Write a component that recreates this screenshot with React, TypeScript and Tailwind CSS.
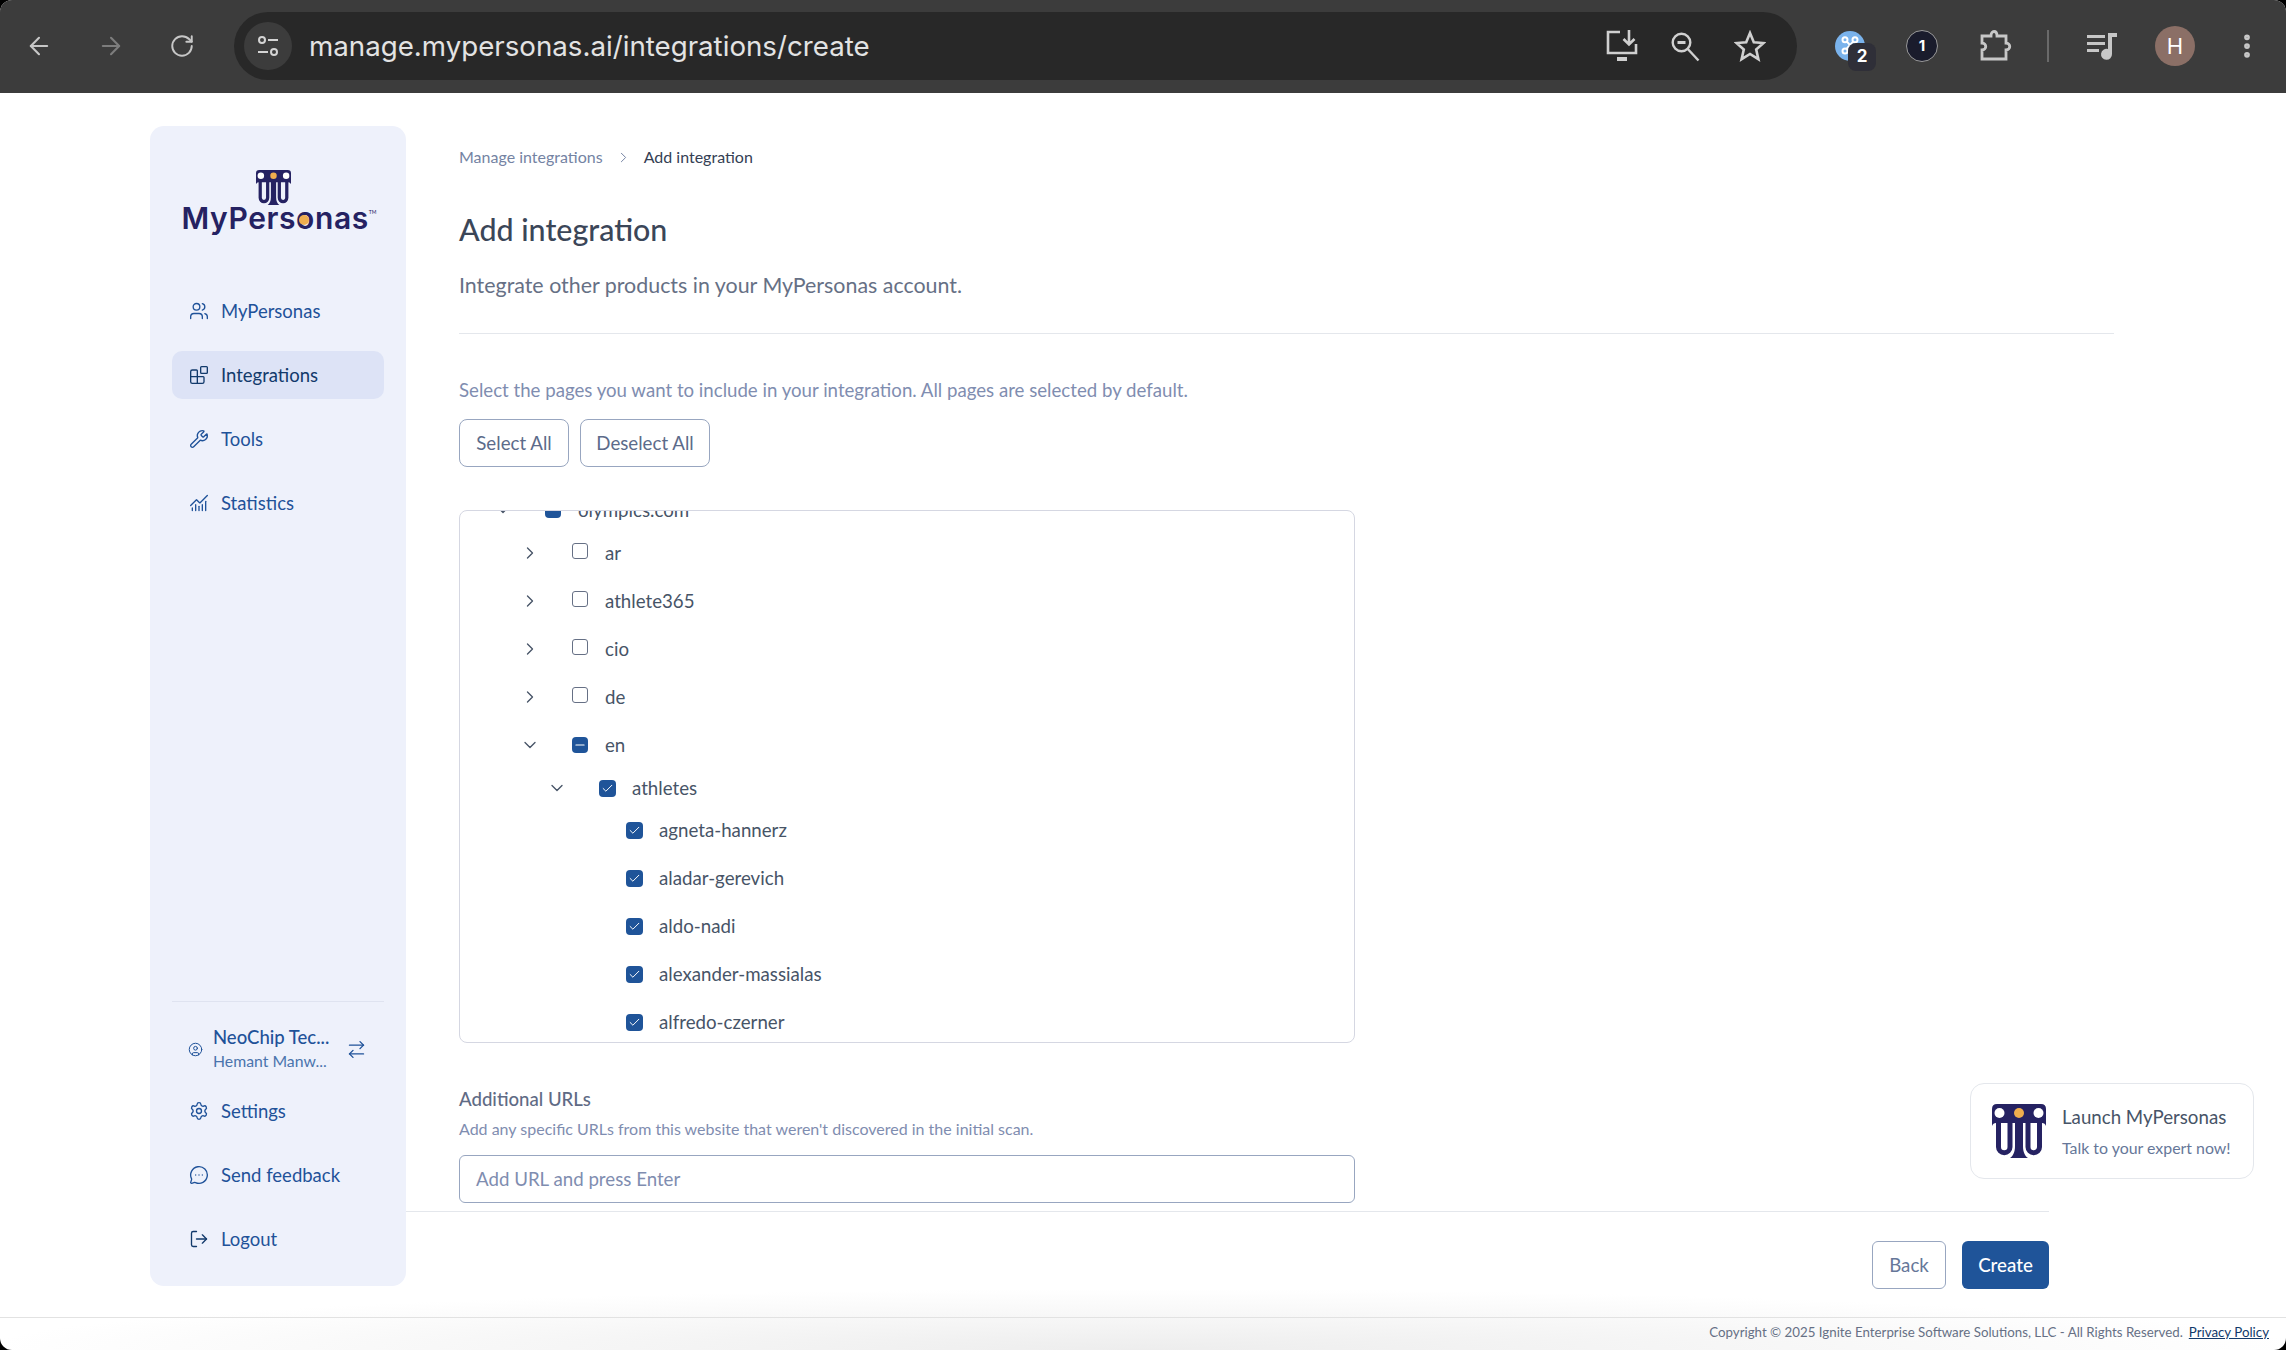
import {
  ArrowLeft,
  ArrowRight,
  ArrowRightLeft,
  Blocks,
  ChartNoAxesCombined,
  Check,
  ChevronDown,
  ChevronRight,
  CircleUser,
  EllipsisVertical,
  LogOut,
  MessageCircleMore,
  Minus,
  RotateCw,
  Settings,
  Users,
  Wrench,
} from "lucide-react";

function Emblem({ className }: { className?: string }) {
  return (
    <svg viewBox="0 0 54 54" className={className}>
      <path d="M5 0H49Q54 0 54 5V22Q53 19 50 19H4Q1 19 0 22V5Q0 0 5 0Z" fill="#252262" />
      <path d="M6.5 18V43a5.75 5.75 0 0 0 11.5 0V18" fill="none" stroke="#252262" strokeWidth="5" />
      <path d="M47.5 18V43a5.75 5.75 0 0 1 -11.5 0V18" fill="none" stroke="#252262" strokeWidth="5" />
      <path d="M23 18H31V42C31 48 33 52 36 54H18C21 52 23 48 23 42Z" fill="#252262" />
      <circle cx="7.5" cy="9" r="5" fill="#ffffff" />
      <circle cx="27" cy="9" r="5" fill="#efae4e" />
      <circle cx="46.5" cy="9" r="5" fill="#ffffff" />
    </svg>
  );
}

function Logo() {
  return (
    <div className="flex flex-col items-center">
      <Emblem className="mr-[12px] h-[35px] w-[35px]" />
      <div className="relative -mt-[4px] flex items-start">
        <span className="font-['Inter',sans-serif] text-[30px] leading-[34px] font-semibold tracking-[0.6px] text-[#252262]">
          MyPersonas
        </span>
        <span className="mt-[9px] text-[5px] leading-none text-[#252262]">TM</span>
        <span className="absolute top-[14px] left-[117px] h-[10px] w-[10px] rounded-full bg-[#efae4e]" />
      </div>
    </div>
  );
}

function NavItem({ icon: Icon, label, active, darkIcon }: { icon: typeof Users; label: string; active?: boolean; darkIcon?: boolean }) {
  return (
    <div
      className={
        active
          ? "flex h-[48px] items-center gap-[12px] rounded-[10px] bg-[#dde3f6] pl-[17px] text-[#123a6b]"
          : "flex h-[48px] items-center gap-[12px] rounded-[10px] pl-[17px] text-[#1f5299]"
      }
    >
      <Icon size={20} strokeWidth={1.6} className={darkIcon ? "text-[#123a6b]" : ""} />
      <span className="text-[18.5px] leading-none">{label}</span>
    </div>
  );
}

function Sidebar() {
  return (
    <aside className="mt-[33px] flex h-[1160px] w-[256px] shrink-0 flex-col justify-between rounded-[14px] bg-[#eef1fb] px-[22px] pt-[44px] pb-[23px]">
      <div>
        <div className="ml-[2px]">
          <Logo />
        </div>
        <nav className="mt-[52px] flex flex-col gap-[16px]">
          <NavItem icon={Users} label="MyPersonas" />
          <NavItem icon={Blocks} label="Integrations" active />
          <NavItem icon={Wrench} label="Tools" />
          <NavItem icon={ChartNoAxesCombined} label="Statistics" />
        </nav>
      </div>
      <div>
        <div className="border-t border-[#dfe3f0] pt-[20px]">
          <div className="flex h-[54px] items-center pl-[16px] text-[#1f5299]">
            <CircleUser size={15} strokeWidth={1.6} />
            <div className="ml-[10px] flex w-[136px] flex-col">
              <span className="text-[18.5px] leading-[24px] font-medium">NeoChip Tec...</span>
              <span className="text-[15.8px] leading-[24px] text-[#4a74ad]">Hemant Manw...</span>
            </div>
            <ArrowRightLeft size={21} strokeWidth={1.6} className="ml-[-3px]" />
          </div>
        </div>
        <div className="mt-[11px] flex flex-col gap-[16px]">
          <NavItem icon={Settings} label="Settings" />
          <NavItem icon={MessageCircleMore} label="Send feedback" />
          <NavItem icon={LogOut} label="Logout" darkIcon />
        </div>
      </div>
    </aside>
  );
}

type Row = { label: string; depth: number; state: "none" | "some" | "all"; open?: boolean; leaf?: boolean; pull?: string };

const rows: Row[] = [
  { label: "olympics.com", depth: 0, state: "some", open: true, pull: "mb-[-5px]" },
  { label: "ar", depth: 1, state: "none" },
  { label: "athlete365", depth: 1, state: "none" },
  { label: "cio", depth: 1, state: "none" },
  { label: "de", depth: 1, state: "none" },
  { label: "en", depth: 1, state: "some", open: true, pull: "mb-[-5px]" },
  { label: "athletes", depth: 2, state: "all", open: true, pull: "mb-[-6px]" },
  { label: "agneta-hannerz", depth: 3, state: "all", leaf: true },
  { label: "aladar-gerevich", depth: 3, state: "all", leaf: true },
  { label: "aldo-nadi", depth: 3, state: "all", leaf: true },
  { label: "alexander-massialas", depth: 3, state: "all", leaf: true },
  { label: "alfredo-czerner", depth: 3, state: "all", leaf: true },
];

const depthPad: Record<number, string> = { 0: "pl-[31px]", 1: "pl-[58px]", 2: "pl-[85px]", 3: "pl-[112px]" };

function TreeRow({ row }: { row: Row }) {
  return (
    <div className={`flex h-[48px] shrink-0 items-center text-[18.7px] text-[#475467] ${depthPad[row.depth]} ${row.pull ?? ""}`}>
      <span className="flex w-[24px] justify-center text-[#475467]">
        {!row.leaf && (row.open ? <ChevronDown size={20} strokeWidth={1.6} /> : <ChevronRight size={20} strokeWidth={1.6} />)}
      </span>
      <span className="ml-[30px] flex items-center">
        {row.state === "none" && <span className="mb-[4px] h-[16px] w-[16px] rounded-[3px] border border-[#667085] bg-white" />}
        {row.state === "some" && (
          <span className="flex h-[16px] w-[16px] items-center justify-center rounded-[4px] bg-[#1f5499] text-white">
            <Minus size={14} strokeWidth={2} />
          </span>
        )}
        {row.state === "all" && (
          <span className="flex h-[17px] w-[17px] items-center justify-center rounded-[4px] bg-[#1f5499] text-white">
            <Check size={13} strokeWidth={1.8} />
          </span>
        )}
      </span>
      <span className={row.state === "all" ? "ml-[16px]" : "ml-[17px]"}>{row.label}</span>
    </div>
  );
}

function BrowserBar() {
  return (
    <header className="flex h-[93px] shrink-0 items-center bg-[#3c3c3c] pb-[1px] text-[#c7c7c7]">
      <div className="flex w-[234px] items-center gap-[44px] pl-[25px]">
        <ArrowLeft size={28} strokeWidth={1.8} />
        <ArrowRight size={28} strokeWidth={1.8} className="text-[#7d7d7d]" />
        <RotateCw size={26} strokeWidth={1.8} />
      </div>
      <div className="flex h-[68px] w-[1563px] items-center rounded-full bg-[#282828] pr-[31px] pl-[10px]">
        <span className="flex h-[48px] w-[48px] items-center justify-center rounded-full bg-[#3c3c3c]">
          <svg viewBox="0 0 24 24" className="h-[24px] w-[24px]" fill="none" stroke="#d4d4d4" strokeWidth="2">
            <circle cx="6" cy="6" r="3" />
            <path d="M12 6H22" />
            <path d="M2 18H12" />
            <circle cx="18" cy="18" r="3" />
          </svg>
        </span>
        <span className="ml-[17px] flex-1 pt-[1px] font-['Inter',sans-serif] text-[27.7px] leading-none text-[#e3e3e3]">
          manage.mypersonas.ai/integrations/create
        </span>
        <span className="flex items-center gap-[30px] text-[#d0d0d0]">
          <svg viewBox="0 0 34 34" className="h-[34px] w-[34px]" fill="none" stroke="currentColor" strokeWidth="2.6">
            <path d="M15 3H3V24H31V15" />
            <path d="M12 30H22" strokeWidth="4" />
            <path d="M24 1V15M18.5 10L24 15.5L29.5 10" />
          </svg>
          <svg viewBox="0 0 32 32" className="h-[32px] w-[32px]" fill="none" stroke="currentColor" strokeWidth="2.4">
            <circle cx="12.5" cy="12.5" r="8.8" />
            <path d="M18.8 19L29.5 30.5" />
            <path d="M8.5 12.5H16.5" strokeWidth="3" />
          </svg>
          <svg viewBox="0 0 32 32" className="ml-[3px] h-[32px] w-[32px]" fill="none" stroke="currentColor" strokeWidth="2.6">
            <path d="M16 3L19.8 12.2L29.6 13L22.2 19.5L24.4 29.2L16 24L7.6 29.2L9.8 19.5L2.4 13L12.2 12.2Z" />
          </svg>
        </span>
      </div>
      <div className="relative ml-[38px] h-[30px] w-[30px] rounded-full bg-[#7ab3ec]">
        <svg viewBox="0 0 24 24" className="h-[30px] w-[30px]" fill="none" stroke="#ffffff" strokeWidth="1.6">
          <circle cx="8" cy="7" r="2" />
          <circle cx="16" cy="7" r="2" />
          <circle cx="8" cy="16" r="2" />
          <path d="M9.5 8.5L14.5 14M14.5 8.5L9.5 14" />
        </svg>
        <span className="absolute top-[12px] left-[13px] flex h-[28px] w-[28px] items-center justify-center rounded-[8px] bg-[#2f2f38] font-['Inter',sans-serif] text-[17px] font-bold text-white">
          2
        </span>
      </div>
      <span className="ml-[41px] flex h-[32px] w-[32px] items-center justify-center rounded-full border border-[#9a9a9a] bg-[#1a1c2c] font-['Inter',sans-serif] text-[15px] font-bold text-white">
        1
      </span>
      <svg viewBox="0 0 34 34" className="ml-[40px] h-[34px] w-[34px]" fill="none" stroke="#c7c7c7" strokeWidth="2.8">
        <path d="M4 7H13C13 1 19 1 19 7H28V14C33 14 33 21 28 21V30H4V21C9 21 9 14 4 14Z" />
      </svg>
      <span className="ml-[35px] h-[32px] w-[2px] bg-[#6a6a6a]" />
      <svg viewBox="0 0 34 34" className="ml-[36px] h-[34px] w-[34px]" fill="#c7c7c7">
        <path d="M2 6H20V9H2ZM2 13H20V16H2ZM2 20H14V23H2Z" />
        <path d="M23 4H32V8H27V25A5.5 5.5 0 1 1 23 20Z" />
      </svg>
      <span className="ml-[36px] flex h-[40px] w-[40px] items-center justify-center rounded-full bg-[#8b6f66] font-['Inter',sans-serif] text-[22px] text-white">
        H
      </span>
      <EllipsisVertical size={30} strokeWidth={2.6} className="ml-[37px]" />
    </header>
  );
}

export default function App() {
  return (
    <div className="h-[1350px] w-[2286px] bg-black font-['Lato',sans-serif]">
      <div className="relative flex h-full flex-col overflow-hidden rounded-[12px] bg-white">
        <BrowserBar />
        <div className="flex min-h-0 flex-1 pl-[150px]">
          <Sidebar />
          <main className="flex min-w-0 flex-1 flex-col">
            <div className="flex-1 pt-[52px] pr-[172px] pl-[53px]">
              <div className="flex h-[24px] items-center text-[16px]">
                <span className="text-[#7483a3]">Manage integrations</span>
                <ChevronRight size={17} strokeWidth={1.4} className="mx-[12px] text-[#7483a3]" />
                <span className="text-[#344054]">Add integration</span>
              </div>
              <h1 className="mt-[40px] text-[30.4px] leading-[40px] font-medium text-[#3b4658]">Add integration</h1>
              <p className="mt-[22px] text-[21.4px] leading-[28px] text-[#667085]">
                Integrate other products in your MyPersonas account.
              </p>
              <div className="mt-[34px] border-t border-[#e4e7ec]" />
              <p className="mt-[44px] text-[18.65px] leading-[24px] text-[#7f8db0]">
                Select the pages you want to include in your integration. All pages are selected by default.
              </p>
              <div className="mt-[17px] flex gap-[11px]">
                <button className="h-[48px] w-[110px] rounded-[8px] border border-[#98a6c0] text-[18.7px] text-[#5c6b8a]">Select All</button>
                <button className="h-[48px] w-[130px] rounded-[8px] border border-[#98a6c0] text-[18.7px] text-[#5c6b8a]">Deselect All</button>
              </div>
              <div className="mt-[43px] flex h-[533px] w-[896px] flex-col overflow-hidden rounded-[8px] border border-[#d5d7e2]">
                <div className="-mt-[25px]">
                  {rows.map((row) => (
                    <TreeRow key={row.label} row={row} />
                  ))}
                </div>
              </div>
              <p className="mt-[44px] text-[18.6px] leading-[24px] font-medium text-[#5f6b85]">Additional URLs</p>
              <p className="mt-[8px] text-[16px] leading-[20px] text-[#7f8db0]">
                Add any specific URLs from this website that weren't discovered in the initial scan.
              </p>
              <div className="mt-[16px] flex h-[48px] w-[896px] items-center rounded-[6px] border border-[#98a6c0] pl-[16px] text-[18.7px] text-[#7f8db0]">
                Add URL and press Enter
              </div>
            </div>
            <div className="mr-[237px] flex h-[78px] shrink-0 items-end justify-end gap-[16px] border-t border-[#e4e7ec]">
              <button className="h-[48px] w-[74px] rounded-[6px] border border-[#98a6c0] text-[18.7px] text-[#667799]">Back</button>
              <button className="h-[48px] w-[87px] rounded-[6px] bg-[#1f5499] text-[18.7px] font-medium text-white">Create</button>
            </div>
            <div className="h-[28px] shrink-0" />
          </main>
        </div>
        <div className="pointer-events-none absolute inset-x-0 bottom-0 h-[60px] bg-[radial-gradient(ellipse_at_bottom,#ededed,transparent_72%)]" />
        <footer className="relative z-10 flex h-[33px] shrink-0 items-center justify-end border-t border-[#e2e2e2] pr-[17px] pb-[2px] text-[13.3px] text-[#667085]">
          <span>Copyright © 2025 Ignite Enterprise Software Solutions, LLC - All Rights Reserved.</span>
          <span className="ml-[6px] text-[#123a6b] underline">Privacy Policy</span>
        </footer>
        <div className="absolute top-[1083px] left-[1970px] flex h-[96px] w-[284px] items-center rounded-[14px] border border-[#e4e7ec] bg-white pl-[21px]">
          <Emblem className="h-[54px] w-[54px]" />
          <div className="ml-[16px] flex flex-col">
            <span className="pt-[1px] text-[18.7px] leading-[24px] text-[#475467]">Launch MyPersonas</span>
            <span className="mt-[9px] text-[15.9px] leading-[20px] text-[#667799]">Talk to your expert now!</span>
          </div>
        </div>
      </div>
    </div>
  );
}
